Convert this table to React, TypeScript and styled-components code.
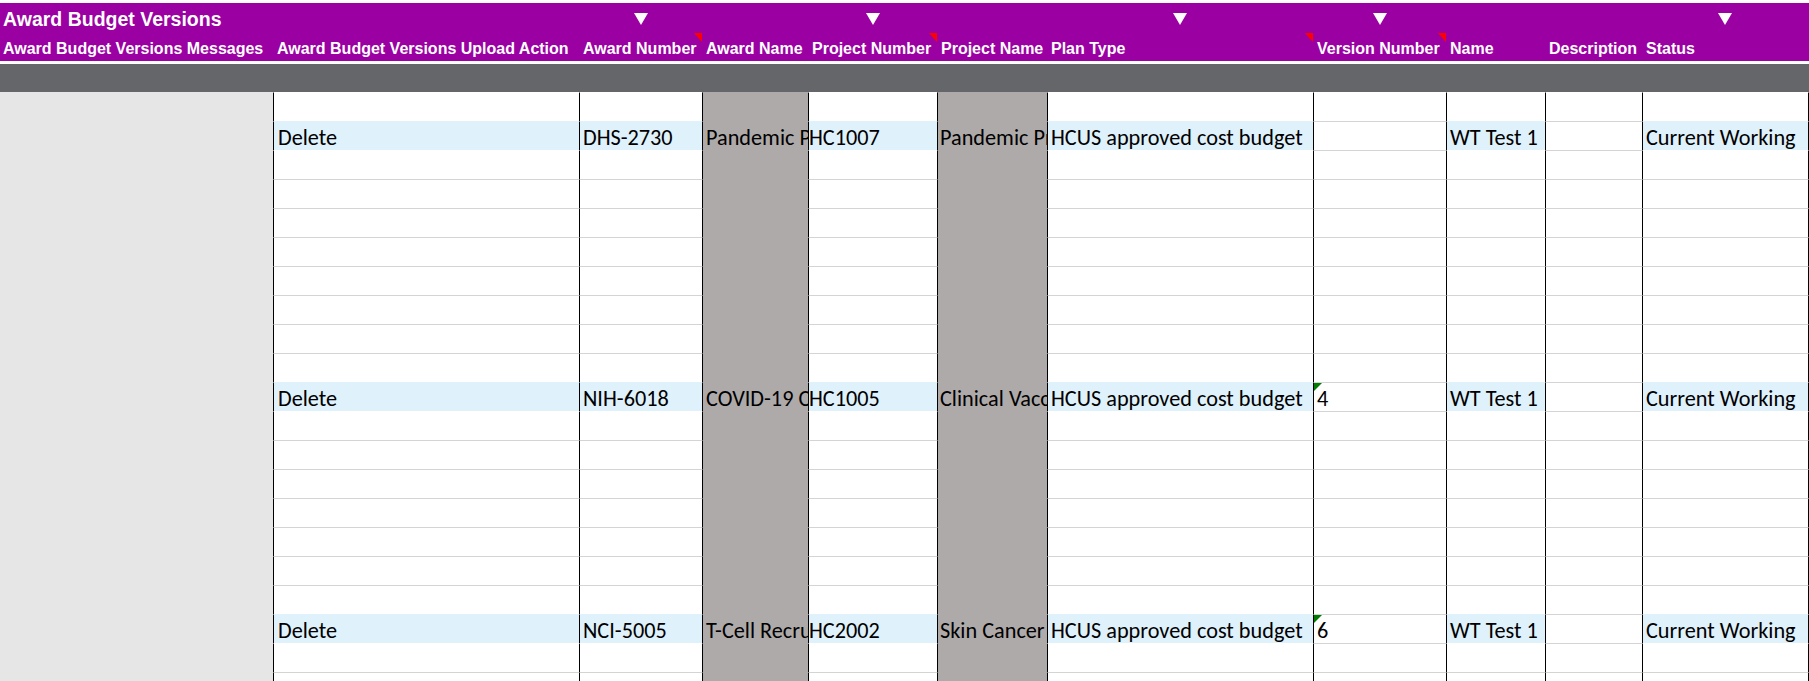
import React from 'react';
import styled, { createGlobalStyle } from 'styled-components';

const COLS = '273px 306px 123px 106px 129px 110px 266px 133px 99px 97px 166px 1px';

const GlobalStyle = createGlobalStyle`
  html, body {
    margin: 0;
    padding: 0;
    background: #ffffff;
    overflow: hidden;
  }
  * { box-sizing: border-box; }
`;

const Page = styled.div`
  height: 100vh;
  width: 1809px;
  padding-top: 3px;
  display: flex;
  flex-direction: column;
  overflow: hidden;
  background: #ffffff;
`;

const Banner = styled.header`
  background: #9b00a3;
  display: flex;
  flex-direction: column;
  font-family: 'Liberation Sans', Arial, sans-serif;
  font-weight: bold;
  color: #ffffff;
`;

const BannerRow = styled.div<{ $h: number }>`
  display: grid;
  grid-template-columns: ${COLS};
  height: ${(p) => p.$h}px;
`;

const TitleCell = styled.div`
  padding: 5px 0 0 3px;
  font-size: 19.5px;
  line-height: 22px;
  white-space: nowrap;
  overflow: visible;
`;

const DropCell = styled.div`
  display: flex;
  justify-content: center;
  padding-top: 10px;
`;

const LabelCell = styled.div<{ $first?: boolean }>`
  position: relative;
  display: flex;
  align-items: flex-end;
  padding: 0 0 3px ${(p) => (p.$first ? 3 : 4)}px;
  font-size: 16px;
  line-height: 18px;
  white-space: nowrap;
`;

const CommentMark = styled.svg`
  position: absolute;
  top: 0;
  right: 0;
`;

const Separator = styled.div`
  height: 3px;
  background: #ffffff;
`;

const FilterBand = styled.div`
  height: 28px;
  background: #646669;
`;

const Sheet = styled.div`
  flex: 1;
  overflow: hidden;
  display: flex;
  flex-direction: column;
`;

const Row = styled.div`
  display: grid;
  grid-template-columns: ${COLS};
  height: 29px;
  flex-shrink: 0;
`;

type Fill = 'side' | 'gray' | 'blue' | 'white';

const FILL_BG: Record<Fill, string> = {
  side: '#e7e6e6',
  gray: '#aeaaaa',
  blue: '#dff1fb',
  white: '#ffffff',
};

const Cell = styled.div<{ $fill: Fill; $hideTop: boolean; $edge: boolean; $indent: number }>`
  position: relative;
  background: ${(p) => FILL_BG[p.$fill]};
  border-top: 1px solid ${(p) => (p.$hideTop ? 'transparent' : '#d4d4d4')};
  border-left: ${(p) => (p.$edge ? '1px solid #000000' : '0')};
  display: flex;
  align-items: flex-end;
  padding: 0 0 0 ${(p) => p.$indent}px;
  overflow: hidden;
  white-space: nowrap;
  font-family: Carlito, Calibri, Lato, 'Liberation Sans', sans-serif;
  font-size: 22.25px;
  line-height: 24px;
  color: #000000;
`;

const TextMark = styled.svg`
  position: absolute;
  top: 0;
  left: 0;
`;

const DropArrow = () => (
  <svg width="14" height="12" viewBox="0 0 14 12">
    <polygon points="0,0 14,0 7,12" fill="#ffffff" />
  </svg>
);

type Col = {
  label: string;
  record: Fill;
  idle: Fill;
  edge: boolean;
  indent: number;
  drop?: boolean;
  comment?: boolean;
};

const columns: Col[] = [
  { label: 'Award Budget Versions Messages', record: 'side', idle: 'side', edge: false, indent: 4 },
  { label: 'Award Budget Versions Upload Action', record: 'blue', idle: 'white', edge: true, indent: 4 },
  { label: 'Award Number', record: 'blue', idle: 'white', edge: true, indent: 3, drop: true, comment: true },
  { label: 'Award Name', record: 'gray', idle: 'gray', edge: true, indent: 3 },
  { label: 'Project Number', record: 'blue', idle: 'white', edge: true, indent: 0, drop: true, comment: true },
  { label: 'Project Name', record: 'gray', idle: 'gray', edge: true, indent: 2 },
  { label: 'Plan Type', record: 'blue', idle: 'white', edge: true, indent: 3, drop: true, comment: true },
  { label: 'Version Number', record: 'white', idle: 'white', edge: true, indent: 3, drop: true, comment: true },
  { label: 'Name', record: 'blue', idle: 'white', edge: true, indent: 3 },
  { label: 'Description', record: 'white', idle: 'white', edge: true, indent: 3 },
  { label: 'Status', record: 'blue', idle: 'white', edge: true, indent: 3, drop: true },
  { label: '', record: 'white', idle: 'white', edge: true, indent: 0 },
];

const records: Record<number, string[]> = {
  1: ['', 'Delete', 'DHS-2730', 'Pandemic Preparedness Research', 'HC1007', 'Pandemic Preparedness', 'HCUS approved cost budget', '', 'WT Test 1', '', 'Current Working', ''],
  10: ['', 'Delete', 'NIH-6018', 'COVID-19 Clinical Trials', 'HC1005', 'Clinical Vaccine Trial', 'HCUS approved cost budget', '4', 'WT Test 1', '', 'Current Working', ''],
  18: ['', 'Delete', 'NCI-5005', 'T-Cell Recruitment Study', 'HC2002', 'Skin Cancer Research', 'HCUS approved cost budget', '6', 'WT Test 1', '', 'Current Working', ''],
};

const ROW_COUNT = 21;

const fillOf = (row: number, col: Col): Fill => (records[row] ? col.record : col.idle);

export default function App() {
  return (
    <>
      <GlobalStyle />
      <Page>
        <Banner>
          <BannerRow $h={30}>
            <TitleCell>Award Budget Versions</TitleCell>
            {columns.slice(1).map((c, i) => (
              <DropCell key={i}>{c.drop ? <DropArrow /> : null}</DropCell>
            ))}
          </BannerRow>
          <BannerRow $h={28}>
            {columns.map((c, i) => (
              <LabelCell key={i} $first={i === 0}>
                {c.label}
                {c.comment ? (
                  <CommentMark width="8" height="9" viewBox="0 0 8 9">
                    <polygon points="0,0 8,0 8,9" fill="#ff0000" />
                  </CommentMark>
                ) : null}
              </LabelCell>
            ))}
          </BannerRow>
        </Banner>
        <Separator />
        <FilterBand />
        <Sheet>
          {Array.from({ length: ROW_COUNT }, (_, r) => (
            <Row key={r}>
              {columns.map((c, ci) => {
                const fill = fillOf(r, c);
                const prevFill = r > 0 ? fillOf(r - 1, c) : 'side';
                const hideTop = r === 0 || fill !== 'white' || prevFill !== 'white';
                const text = records[r] ? records[r][ci] : '';
                return (
                  <Cell key={ci} $fill={fill} $hideTop={hideTop} $edge={c.edge} $indent={c.indent}>
                    {ci === 7 && text ? (
                      <TextMark width="8" height="8" viewBox="0 0 8 8">
                        <polygon points="0,0 8,0 0,8" fill="#007a00" />
                      </TextMark>
                    ) : null}
                    {text}
                  </Cell>
                );
              })}
            </Row>
          ))}
        </Sheet>
      </Page>
    </>
  );
}
